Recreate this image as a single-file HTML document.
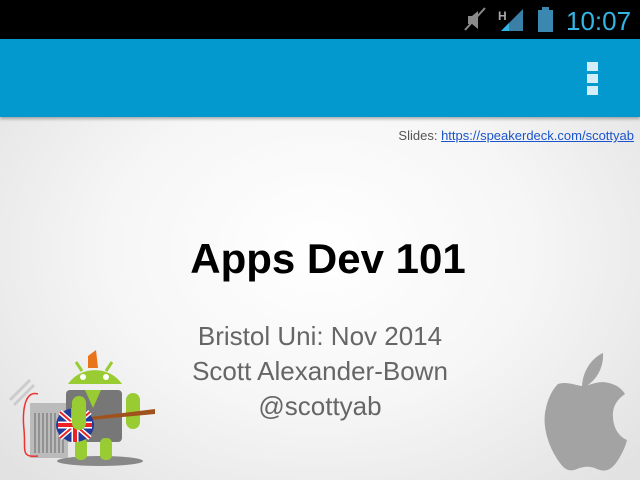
<!DOCTYPE html>
<html><head><style>
body{margin:0;width:640px;height:480px;overflow:hidden;position:relative;font-family:"Liberation Sans",sans-serif;background:radial-gradient(ellipse 420px 320px at 320px 250px,#fff 0%,#f6f6f6 50%,#e2e2e2 100%);}
.sb{position:absolute;left:0;top:0;width:640px;height:39px;background:#000;}
.ab{position:absolute;left:0;top:39px;width:640px;height:78px;background:#0399cf;box-shadow:0 2px 3px rgba(0,0,0,.3);}
.t{position:absolute;left:0;width:640px;text-align:center;white-space:nowrap;}
</style></head><body>
<div class="sb">
<svg width="640" height="39" style="position:absolute;left:0;top:0">
<g fill="#8a8a8a"><path d="M468 16h4l6-5v18l-6-5h-4z"/><path d="M465 30l20-22" stroke="#8a8a8a" stroke-width="2"/></g>
<text x="498" y="20" font-family="Liberation Sans" font-size="12" font-weight="bold" fill="#aaa">H</text>
<path d="M501 31L523 9v22z" fill="#3a7fa6"/><path d="M501 31l8-8v8z" fill="#33b5e5"/>
<rect x="538" y="10" width="15" height="22" fill="#3a87b0"/><rect x="542" y="7" width="7" height="4" fill="#3a87b0"/>
<text x="566" y="30" font-family="Liberation Sans" font-size="26" fill="#33b5e5">10:07</text>
</svg></div>
<div class="ab"><div style="position:absolute;left:587px;top:23px;width:11px;height:9px;background:#d4eef9;box-shadow:0 12px 0 #d4eef9,0 24px 0 #d4eef9"></div></div>
<div style="position:absolute;right:6px;top:128px;font-size:13px;color:#555">Slides: <span style="color:#1a55cc;text-decoration:underline">https://speakerdeck.com/scottyab</span></div>
<div class="t" style="top:235px;left:8px;font-size:42px;font-weight:bold;color:#000">Apps Dev 101</div>
<div class="t" style="top:319px;font-size:26px;color:#666;line-height:35px">Bristol Uni: Nov 2014<br>Scott Alexander-Bown<br>@scottyab</div>
<svg width="180" height="150" style="position:absolute;left:0;top:330px">
<path d="M10 70l20-20M14 75l20-20" stroke="#ccc" stroke-width="3"/>
<ellipse cx="100" cy="131" rx="43" ry="5" fill="#888"/>
<rect x="30" y="73" width="38" height="55" fill="#bbb"/><g stroke="#777" stroke-width="1.2"><path d="M35 83v40M39 83v40M43 83v40M47 83v40M51 83v40M55 83v40M59 83v40M63 83v40"/></g>
<path d="M38 64C25 60 22 80 24 100S20 128 38 126" stroke="#e33" stroke-width="1.5" fill="none"/>
<path d="M68 54a32 30 0 0 1 54 0z" fill="#9c3"/><path d="M76 32l6 9M112 32l-6 9" stroke="#9c3" stroke-width="3"/>
<path d="M88 26l8-6 2 18h-10z" fill="#e8741c"/>
<circle cx="83" cy="47" r="3" fill="#fff"/><circle cx="106" cy="47" r="3" fill="#fff"/>
<rect x="66" y="60" width="56" height="52" rx="4" fill="#777"/><path d="M85 60l8 18 8-18z" fill="#9c3"/>
<rect x="75" y="108" width="12" height="22" rx="5" fill="#9c3"/><rect x="100" y="108" width="12" height="22" rx="5" fill="#9c3"/>
<rect x="126" y="63" width="14" height="36" rx="7" fill="#9c3"/>
<path d="M90 90l65-6 0-5-65 8z" fill="#a0521d"/>
<ellipse cx="75" cy="95" rx="19" ry="17" fill="#223a99"/><path d="M60 82l30 26M60 108l30-26" stroke="#fff" stroke-width="5"/><path d="M60 82l30 26M60 108l30-26" stroke="#e22" stroke-width="2"/><path d="M75 78v34M58 95h34" stroke="#fff" stroke-width="7"/><path d="M75 78v34M58 95h34" stroke="#e22" stroke-width="4"/>
<rect x="72" y="66" width="14" height="34" rx="7" fill="#9c3"/>
</svg>
<svg width="110" height="130" style="position:absolute;left:530px;top:350px" viewBox="530 350 110 130" fill="#a3a3a3">
<path d="M582 388c0-17 10-30 21-35 1 16-8 30-21 35z"/>
<path d="M558 384c10-3 18 2 25 2s14-6 26-3c8 2 13 6 16 11-9 6-13 14-12 24 1 12 7 19 14 22-2 8-6 16-11 23-6 8-12 9-19 6-6-3-13-3-20 0-7 3-12 1-17-6-10-13-19-36-14-55 3-13 8-20 12-24z"/>
</svg>
</body></html>
